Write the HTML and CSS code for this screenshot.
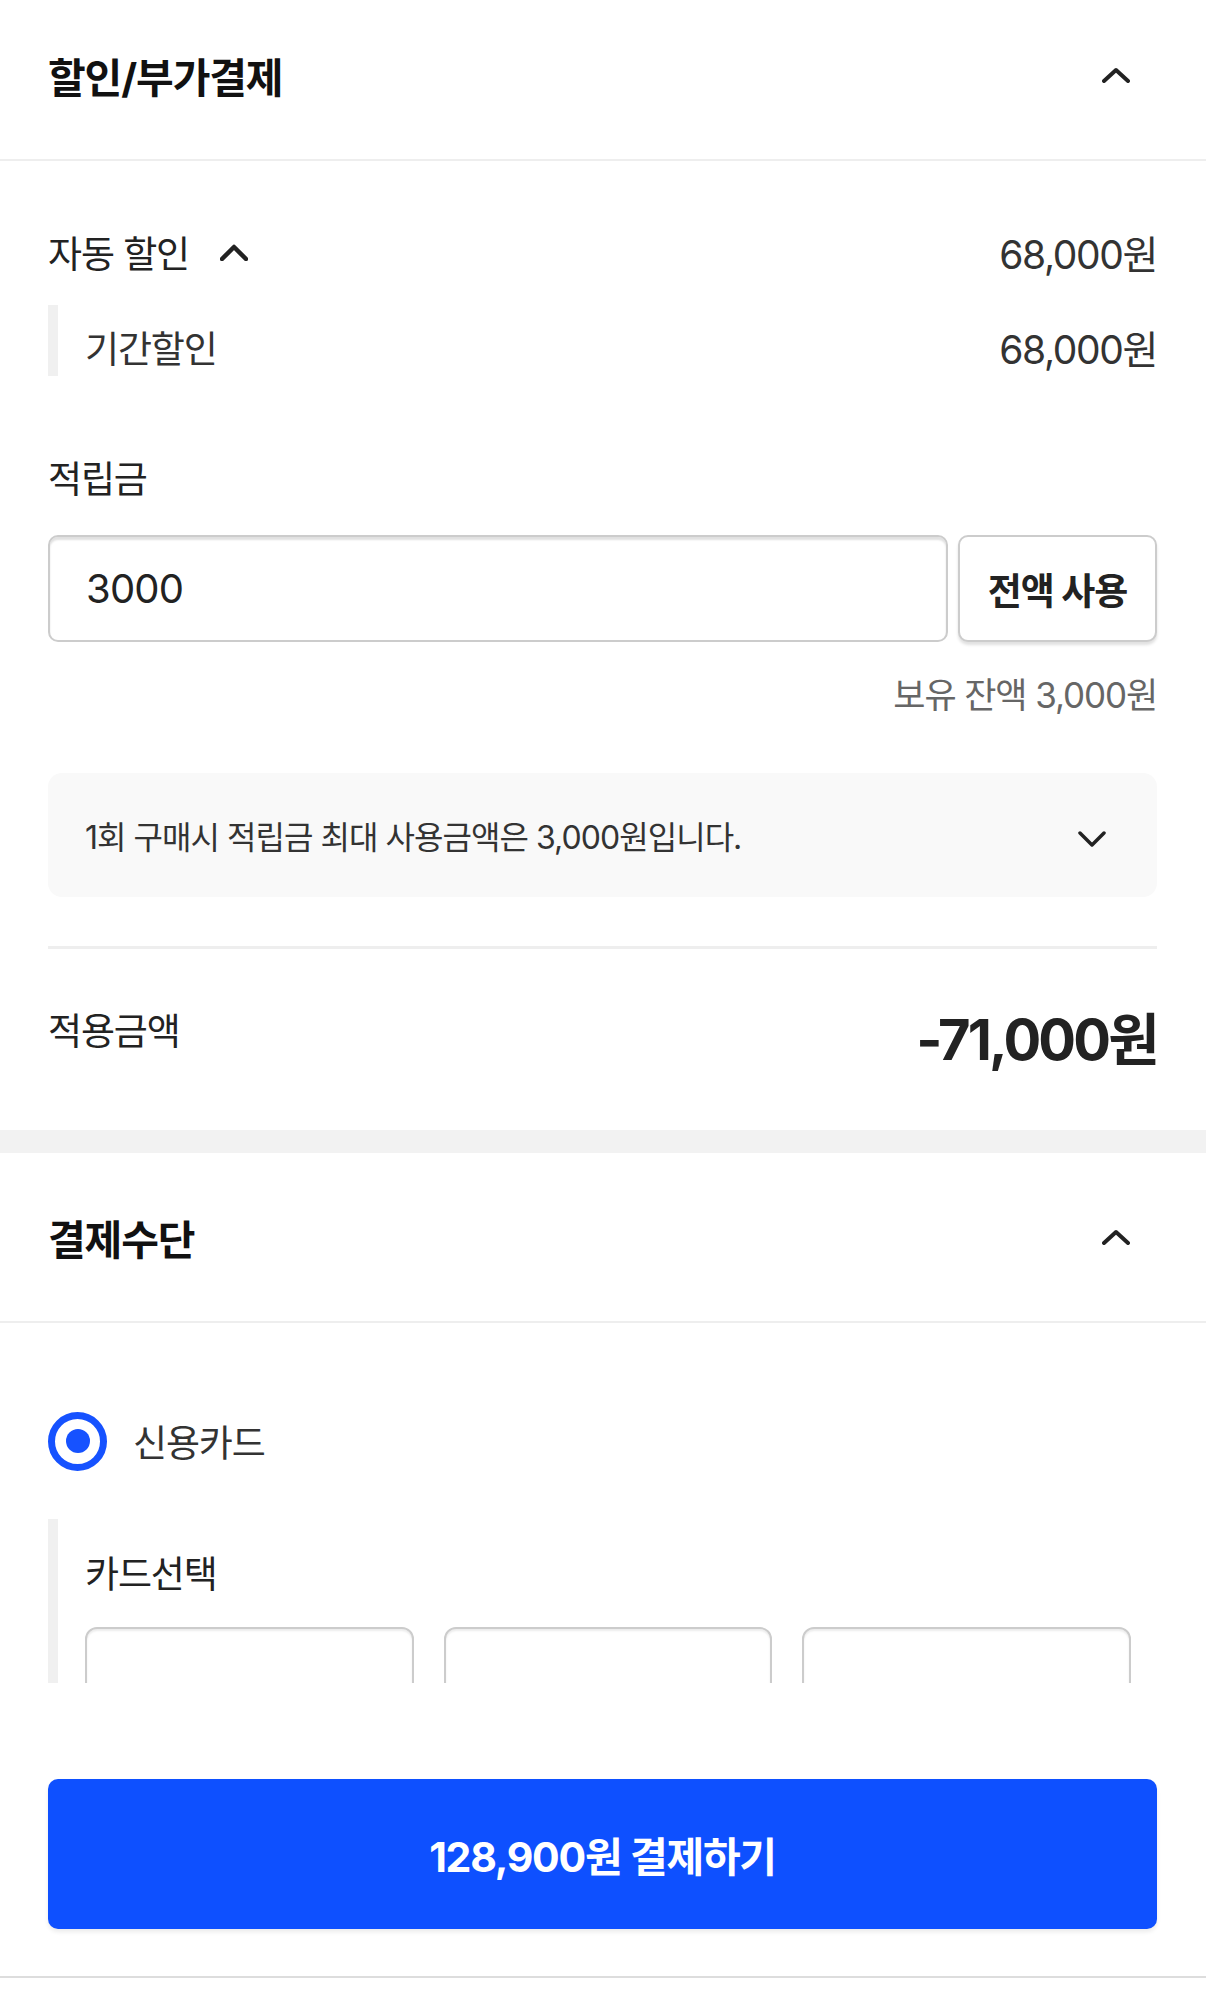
FILE: index.html
```html
<!DOCTYPE html>
<html lang="ko">
<head>
    <meta charset="UTF-8">
    <meta name="viewport" content="width=device-width, initial-scale=1.0">
    <title>결제</title>
    <link rel="stylesheet" href="styles.css">
</head>
<body>
    <div class="page">
        <section class="panel">
            <div class="panel-head">
                <h2>할인/부가결제</h2>
                <svg class="chev-lg" viewBox="0 0 28 16" width="28" height="16"><polyline points="2,14 14,3 26,14" /></svg>
            </div>
            <div class="panel-body">
                <div class="auto-row">
                    <div class="auto-label">
                        <span>자동 할인</span>
                        <svg class="chev-sm" viewBox="0 0 28 17" width="28" height="17"><polyline points="2,15 14,3 26,15" /></svg>
                    </div>
                    <span class="amount">68,000원</span>
                </div>
                <div class="sub-row">
                    <span>기간할인</span>
                    <span class="amount">68,000원</span>
                </div>

                <div class="field">
                    <label class="field-label" for="point">적립금</label>
                    <div class="input-row">
                        <input id="point" class="point-input" type="text" value="3000">
                        <button class="all-btn">전액 사용</button>
                    </div>
                    <p class="balance">보유 잔액 3,000원</p>
                </div>

                <div class="notice">
                    <span>1회 구매시 적립금 최대 사용금액은 3,000원입니다.</span>
                    <svg class="chev-md" viewBox="0 0 28 17" width="28" height="17"><polyline points="2,2 14,14 26,2" /></svg>
                </div>

                <div class="divider"></div>

                <div class="total-row">
                    <span class="total-label">적용금액</span>
                    <strong class="total">-71,000원</strong>
                </div>
            </div>
        </section>

        <div class="band"></div>

        <section class="panel">
            <div class="panel-head">
                <h2>결제수단</h2>
                <svg class="chev-lg" viewBox="0 0 28 16" width="28" height="16"><polyline points="2,14 14,3 26,14" /></svg>
            </div>
            <div class="panel-body pay-body">
                <label class="radio-row">
                    <span class="radio"><span class="dot"></span></span>
                    <span>신용카드</span>
                </label>
                <div class="card-area">
                    <p class="card-title">카드선택</p>
                    <div class="card-grid">
                        <div class="card-box"></div>
                        <div class="card-box"></div>
                        <div class="card-box"></div>
                    </div>
                </div>
                <button class="pay-btn">128,900원 결제하기</button>
            </div>
            <div class="bottom-line"></div>
        </section>
    </div>
</body>
</html>
```

FILE: styles.css
```css
body {
    margin: 0;
    padding: 0;
    background-color: #fff;
    font-family: Inter, "Noto Sans CJK KR", sans-serif;
    color: #222;
    font-size: 37px;
    letter-spacing: -0.03em;
}

.page {
    margin-top: -9px; /* scrolled a bit */
}

.panel-head {
    display: flex;
    justify-content: space-between;
    align-items: center;
    height: 168px;
    padding: 0 76px 0 48px;
    border-bottom: 2px solid #eee;
}

.panel-head h2 {
    margin: 0;
    font-size: 41px;
    font-weight: 700;
    color: #111;
}

svg polyline {
    fill: none;
    stroke: #222;
    stroke-width: 3.5;
    stroke-linecap: round;
    stroke-linejoin: round;
}

.chev-lg polyline {
    stroke-width: 4;
}

.panel-body {
    padding: 61px 49px 55px 48px;
}

.auto-row {
    display: flex;
    justify-content: space-between;
    align-items: center;
    height: 60px;
}

.auto-label {
    display: flex;
    align-items: center;
    gap: 31px;
}

.chev-sm polyline {
    stroke-width: 4.5;
}

.amount {
    font-size: 39px;
    letter-spacing: -0.035em;
    color: #333;
}

.sub-row {
    display: flex;
    justify-content: space-between;
    align-items: center;
    box-sizing: border-box;
    height: 71px;
    margin-top: 23px;
    padding: 12px 0 0 27px;
    border-left: 10px solid #f0f0f0;
    color: #333;
}

.field {
    margin-top: 79px;
}

.field-label {
    display: block;
    line-height: 50px;
}

.input-row {
    display: flex;
    gap: 10px;
    margin-top: 30px;
    height: 107px;
}

.point-input {
    flex: 1;
    min-width: 0;
    box-sizing: border-box;
    height: 107px;
    padding: 0 0 0 36px;
    border: 2px solid #ccc;
    border-radius: 10px;
    box-shadow: inset 0 3px 2px rgba(0, 0, 0, 0.12);
    font-family: Inter, "Noto Sans CJK KR", sans-serif;
    font-size: 40px;
    letter-spacing: -0.02em;
    color: #222;
    outline: none;
}

.all-btn {
    width: 199px;
    height: 107px;
    border: 2px solid #ccc;
    border-radius: 10px;
    background-color: #fff;
    box-shadow: 0 3px 3px rgba(0, 0, 0, 0.12);
    font-family: Inter, "Noto Sans CJK KR", sans-serif;
    font-size: 37px;
    font-weight: 700;
    letter-spacing: -0.03em;
    color: #222;
    padding: 0;
}

.balance {
    margin: 33px 0 0;
    text-align: right;
    line-height: 40px;
    font-size: 35px;
    color: #666;
}

.notice {
    display: flex;
    justify-content: space-between;
    align-items: center;
    height: 124px;
    margin-top: 58px;
    padding: 0 51px 0 37px;
    box-sizing: border-box;
    border-radius: 14px;
    background-color: #f9f9f9;
    font-size: 32px;
    letter-spacing: -0.03em;
    color: #333;
}

.chev-md {
    margin-top: 8px;
}

.divider {
    height: 3px;
    margin-top: 49px;
    background-color: #eee;
}

.total-row {
    display: flex;
    justify-content: space-between;
    align-items: center;
    height: 80px;
    margin-top: 46px;
}

.total-label {
    padding-bottom: 12px;
}

.total {
    font-size: 56px;
    font-weight: 700;
    letter-spacing: -0.05em;
    color: #222;
}

.band {
    height: 23px;
    background-color: #f2f2f2;
}

.pay-body {
    padding-top: 88px;
    padding-bottom: 0;
}

.radio-row {
    display: flex;
    align-items: center;
    gap: 26px;
    height: 60px;
    color: #333;
}

.radio {
    display: flex;
    justify-content: center;
    align-items: center;
    box-sizing: border-box;
    width: 59px;
    height: 59px;
    border: 7px solid #1652ff;
    border-radius: 50%;
}

.radio .dot {
    width: 24px;
    height: 24px;
    border-radius: 50%;
    background-color: #1652ff;
}

.card-area {
    height: 164px;
    margin-top: 48px;
    padding: 31px 26px 0 27px;
    box-sizing: border-box;
    border-left: 10px solid #f0f0f0;
    overflow: hidden;
}

.card-title {
    margin: 0;
    line-height: 50px;
}

.card-grid {
    display: grid;
    grid-template-columns: repeat(3, 1fr);
    gap: 30px;
    margin-top: 27px;
}

.card-box {
    height: 150px;
    border: 2px solid #ccc;
    border-radius: 12px;
    box-shadow: inset 0 2px 2px rgba(0, 0, 0, 0.08);
}

.pay-btn {
    display: block;
    width: 100%;
    height: 150px;
    margin-top: 96px;
    border: none;
    border-radius: 10px;
    background-color: #0e50ff;
    box-shadow: 0 3px 4px rgba(0, 0, 0, 0.08);
    font-family: Inter, "Noto Sans CJK KR", sans-serif;
    font-size: 41px;
    font-weight: 700;
    letter-spacing: -0.03em;
    color: #fff;
}

.bottom-line {
    height: 2px;
    margin-top: 47px;
    background-color: #ddd;
}
```
